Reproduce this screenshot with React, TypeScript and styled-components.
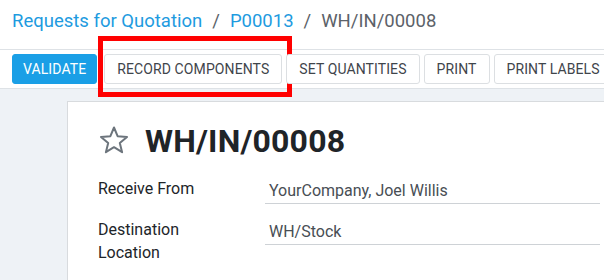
import React from "react";
import styled, { createGlobalStyle } from "styled-components";

const GlobalStyle = createGlobalStyle`
  html, body {
    margin: 0;
    padding: 0;
    overflow: hidden;
    background: #ffffff;
  }

  body {
    font-family: Roboto, "Liberation Sans", sans-serif;
    color: #212529;
  }
`;

const Page = styled.div`
  width: 604px;
  height: 280px;
  display: flex;
  flex-direction: column;
  overflow: hidden;
`;

const Breadcrumbs = styled.ol`
  display: flex;
  align-items: baseline;
  gap: 10px;
  margin: 0;
  padding: 9px 12px 0;
  height: 50px;
  box-sizing: border-box;
  list-style: none;
  font-size: 18.5px;
  line-height: 24px;
  border-bottom: 1px solid #dee2e6;
`;

const Crumb = styled.li<{ $active?: boolean }>`
  color: ${({ $active }) => ($active ? "#5c6269" : "#1e9bdf")};
  white-space: nowrap;
`;

const Slash = styled.li`
  color: #5c6269;
`;

const Toolbar = styled.div`
  display: flex;
  align-items: center;
  gap: 4px;
  height: 39px;
  box-sizing: border-box;
  padding: 0 12px;
  border-bottom: 1px solid #dee2e6;
  white-space: nowrap;
`;

const Button = styled.button<{ $primary?: boolean }>`
  position: relative;
  flex: none;
  height: 30px;
  padding: 0 ${({ $primary }) => ($primary ? "10px" : "12px")};
  margin-right: ${({ $primary }) => ($primary ? "3px" : "0")};
  border-radius: 3px;
  border: 1px solid ${({ $primary }) => ($primary ? "#1a9fe6" : "#dcdfe2")};
  background: ${({ $primary }) => ($primary ? "#1a9fe6" : "#ffffff")};
  color: ${({ $primary }) => ($primary ? "#ffffff" : "#3f454b")};
  font-family: inherit;
  font-size: 14px;
  letter-spacing: 0.1px;
  text-transform: uppercase;
  cursor: pointer;
`;

const Highlight = styled.span`
  position: absolute;
  left: -7px;
  top: -19px;
  width: 194px;
  height: 61px;
  box-sizing: border-box;
  border: 5px solid #ff0000;
  pointer-events: none;
`;

const Content = styled.main`
  flex: 1;
  background: #eef2f6;
  padding: 12px 0 0 67px;
`;

const Sheet = styled.section`
  width: 600px;
  height: 100%;
  box-sizing: border-box;
  background: #ffffff;
  border: 1px solid #d8dbde;
  border-bottom: none;
  padding: 20px 0 0 30px;
`;

const TitleRow = styled.div`
  display: flex;
  align-items: center;
  gap: 15px;
  margin-bottom: 17px;
`;

const StarIcon = styled.svg`
  flex: none;
  width: 32px;
  height: 30px;
  margin-top: -2px;
`;

const Title = styled.h1`
  margin: 0;
  font-size: 32px;
  line-height: 38px;
  font-weight: 700;
  letter-spacing: 0.2px;
  color: #1f2428;
`;

const Fields = styled.div`
  display: grid;
  grid-template-columns: 167px 335px;
  row-gap: 14px;
`;

const Label = styled.div`
  padding-right: 40px;
  font-size: 16px;
  line-height: 23px;
  color: #212529;
`;

const Value = styled.div`
  padding: 2px 0 1px 4px;
  font-size: 16px;
  line-height: 23px;
  color: #484e54;
  border-bottom: 1px solid #ced2d6;
  align-self: start;
`;

const fields = [
  { label: "Receive From", value: "YourCompany, Joel Willis" },
  { label: "Destination Location", value: "WH/Stock" },
];

const Star = () => (
  <StarIcon viewBox="0 0 32 30">
    <path
      d="M16 2.5 L19.6 11.2 L29 11.9 L21.8 18 L24.1 27.2 L16 22.2 L7.9 27.2 L10.2 18 L3 11.9 L12.4 11.2 Z"
      fill="none"
      stroke="#6c747c"
      strokeWidth="2"
      strokeLinejoin="round"
    />
  </StarIcon>
);

export default function App() {
  return (
    <Page>
      <GlobalStyle />
      <Breadcrumbs>
        <Crumb>Requests for Quotation</Crumb>
        <Slash>/</Slash>
        <Crumb>P00013</Crumb>
        <Slash>/</Slash>
        <Crumb $active>WH/IN/00008</Crumb>
      </Breadcrumbs>
      <Toolbar>
        <Button $primary>Validate</Button>
        <Button>
          Record Components
          <Highlight />
        </Button>
        <Button>Set Quantities</Button>
        <Button>Print</Button>
        <Button>Print Labels</Button>
      </Toolbar>
      <Content>
        <Sheet>
          <TitleRow>
            <Star />
            <Title>WH/IN/00008</Title>
          </TitleRow>
          <Fields>
            {fields.map((f) => (
              <React.Fragment key={f.label}>
                <Label>{f.label}</Label>
                <Value>{f.value}</Value>
              </React.Fragment>
            ))}
          </Fields>
        </Sheet>
      </Content>
    </Page>
  );
}
